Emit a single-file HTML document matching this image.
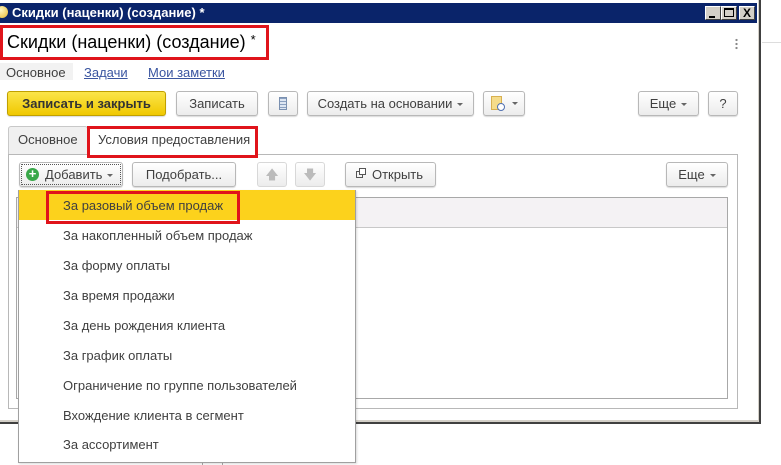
<!DOCTYPE html>
<html><head><meta charset="utf-8"><style>
*{box-sizing:border-box;margin:0;padding:0}
body{width:781px;height:465px;position:relative;background:#fff;font-family:"Liberation Sans",Arial,sans-serif;font-size:13px;color:#333;overflow:hidden}
.a{position:absolute}
.btn{position:absolute;height:25px;border:1px solid #b8b8b8;border-radius:3px;background:linear-gradient(#fff,#ececec);box-shadow:0 1px 1px rgba(0,0,0,.15);line-height:23px;text-align:center;color:#404040;font-size:13px;white-space:nowrap}
.arr{display:inline-block;width:0;height:0;border-left:3px solid transparent;border-right:3px solid transparent;border-top:3px solid #666;vertical-align:middle;margin-left:5px}
.red{position:absolute;border:3px solid #e0141b}
.it{position:absolute;left:63px;font-size:13px;color:#404040}
</style></head><body>
<div class="a" style="left:0;top:0;width:761px;height:424px;background:#fff;border-right:2px solid #404040;border-bottom:2px solid #404040"></div>
<div class="a" style="left:0;top:0;width:759px;height:422px;border-right:1px solid #d4d0c8;border-bottom:2px solid #d4d0c8"></div>
<div class="a" style="left:762px;top:42px;width:19px;height:1px;background:#ddd"></div>
<div class="a" style="left:0;top:3px;width:757px;height:20px;background:#0a246a"></div>
<div class="a" style="left:-4px;top:6px;width:12px;height:12px;border-radius:50%;background:radial-gradient(circle at 40% 35%,#fff6c0,#e8b830)"></div>
<div class="a" style="left:12px;top:5px;color:#fff;font-weight:bold;font-size:13px">Скидки (наценки) (создание) *</div>
<div class="a" style="left:705px;top:6px;width:16px;height:14px;background:#d4d0c8;border:1px solid;border-color:#fff #404040 #404040 #fff"><div class="a" style="left:3px;top:9px;width:6px;height:2px;background:#000"></div></div>
<div class="a" style="left:721px;top:6px;width:16px;height:14px;background:#d4d0c8;border:1px solid;border-color:#fff #404040 #404040 #fff"><div class="a" style="left:2px;top:1px;width:10px;height:9px;border:1px solid #000;border-top-width:2px"></div></div>
<div class="a" style="left:739px;top:6px;width:16px;height:14px;background:#d4d0c8;border:1px solid;border-color:#fff #404040 #404040 #fff;font-size:12px;font-weight:bold;line-height:12px;text-align:center;color:#000">X</div>

<div class="a" style="left:7px;top:32px;font-size:18px;color:#000;white-space:nowrap">Скидки (наценки) (создание) <span style="font-size:13px;vertical-align:4px">*</span></div>
<div class="red" style="left:0;top:25px;width:269px;height:35px"></div>
<div class="a" style="left:735px;top:38px;width:3px;height:12px;background:radial-gradient(circle,#888 1px,transparent 1.3px) 0 0/3px 4px"></div>

<div class="a" style="left:0;top:63px;width:73px;height:17px;background:#f2f2f2"></div>
<div class="a" style="left:6px;top:65px;color:#404040">Основное</div>
<div class="a" style="left:84px;top:65px;color:#3a55a0;text-decoration:underline">Задачи</div>
<div class="a" style="left:148px;top:65px;color:#3a55a0;text-decoration:underline">Мои заметки</div>

<div class="btn" style="left:7px;top:91px;width:159px;background:linear-gradient(#fbe54a,#f0c800);border-color:#c0a000;font-weight:bold;color:#333">Записать и закрыть</div>
<div class="btn" style="left:176px;top:91px;width:82px">Записать</div>
<div class="btn" style="left:268px;top:91px;width:30px"><div class="a" style="left:10px;top:5px;width:8px;height:13px;background:repeating-linear-gradient(#8aa0c0 0 1px,#dde6f2 1px 3px);border:1px solid #7a90b0"></div></div>
<div class="btn" style="left:307px;top:91px;width:167px">Создать на основании<span class="arr"></span></div>
<div class="btn" style="left:483px;top:91px;width:42px;text-align:left"><div class="a" style="left:7px;top:4px;width:11px;height:14px;background:#f5dc8a;border:1px solid #d8b050"></div><div class="a" style="left:13px;top:11px;width:8px;height:8px;border-radius:50%;background:#fff;border:1px solid #5070b0"></div><span class="arr" style="position:absolute;left:23px;top:10px"></span></div>
<div class="btn" style="left:638px;top:91px;width:61px">Еще<span class="arr"></span></div>
<div class="btn" style="left:708px;top:91px;width:30px">?</div>

<div class="a" style="left:8px;top:126px;width:80px;height:29px;background:#f0f0f0;border:1px solid #c8c8c8;border-bottom:none;border-radius:3px 3px 0 0"></div>
<div class="a" style="left:18px;top:132px;color:#404040">Основное</div>
<div class="a" style="left:8px;top:154px;width:730px;height:255px;border:1px solid #b8b8b8"></div>
<div class="a" style="left:89px;top:127px;width:168px;height:29px;background:#fff"></div>
<div class="a" style="left:98px;top:132px;color:#404040">Условия предоставления</div>
<div class="red" style="left:87px;top:126px;width:171px;height:32px"></div>

<div class="a" style="left:16px;top:197px;width:712px;height:202px;border:1px solid #a8a8a8"></div>
<div class="a" style="left:17px;top:198px;width:710px;height:30px;background:#f4f2f4;border-bottom:1px solid #c8c8c8"></div>

<div class="btn" style="left:19px;top:162px;width:104px;text-align:left;padding-left:25px;outline:1px dotted #555;outline-offset:-3px">Добавить<span class="arr"></span><div class="a" style="left:6px;top:5px;width:13px;height:13px;border-radius:50%;background:#3aa84a;color:#fff;font-weight:bold;font-size:13px;line-height:12px;text-align:center">+</div></div>
<div class="btn" style="left:132px;top:162px;width:104px">Подобрать...</div>
<div class="btn" style="left:257px;top:162px;width:30px;color:#bbb;box-shadow:none;border-color:#d8d8d8">&#129093;</div>
<div class="btn" style="left:295px;top:162px;width:30px;color:#bbb;box-shadow:none;border-color:#d8d8d8">&#129095;</div>
<div class="btn" style="left:345px;top:162px;width:91px;padding-left:14px">Открыть<div class="a" style="left:10px;top:8px;width:7px;height:7px;border:1px solid #555"></div><div class="a" style="left:13px;top:5px;width:7px;height:7px;border:1px solid #555;background:#fff"></div></div>
<div class="btn" style="left:666px;top:162px;width:62px">Еще<span class="arr"></span></div>

<div class="a" style="left:202px;top:424px;width:1px;height:41px;background:#aaa"></div>
<div class="a" style="left:222px;top:424px;width:1px;height:41px;background:#aaa"></div>

<div class="a" style="left:18px;top:190px;width:338px;height:273px;background:#fff;border:1px solid #a0a0a0;box-shadow:1px 1px 2px rgba(0,0,0,.15)"></div>
<div class="a" style="left:19px;top:190px;width:336px;height:30px;background:#fcd21c"></div>
<div class="it" style="top:198px">За разовый объем продаж</div>
<div class="red" style="left:46px;top:191px;width:194px;height:33px"></div>
<div class="it" style="top:228px">За накопленный объем продаж</div>
<div class="it" style="top:258px">За форму оплаты</div>
<div class="it" style="top:288px">За время продажи</div>
<div class="it" style="top:318px">За день рождения клиента</div>
<div class="it" style="top:348px">За график оплаты</div>
<div class="it" style="top:378px">Ограничение по группе пользователей</div>
<div class="it" style="top:408px">Вхождение клиента в сегмент</div>
<div class="it" style="top:437px">За ассортимент</div>
</body></html>
